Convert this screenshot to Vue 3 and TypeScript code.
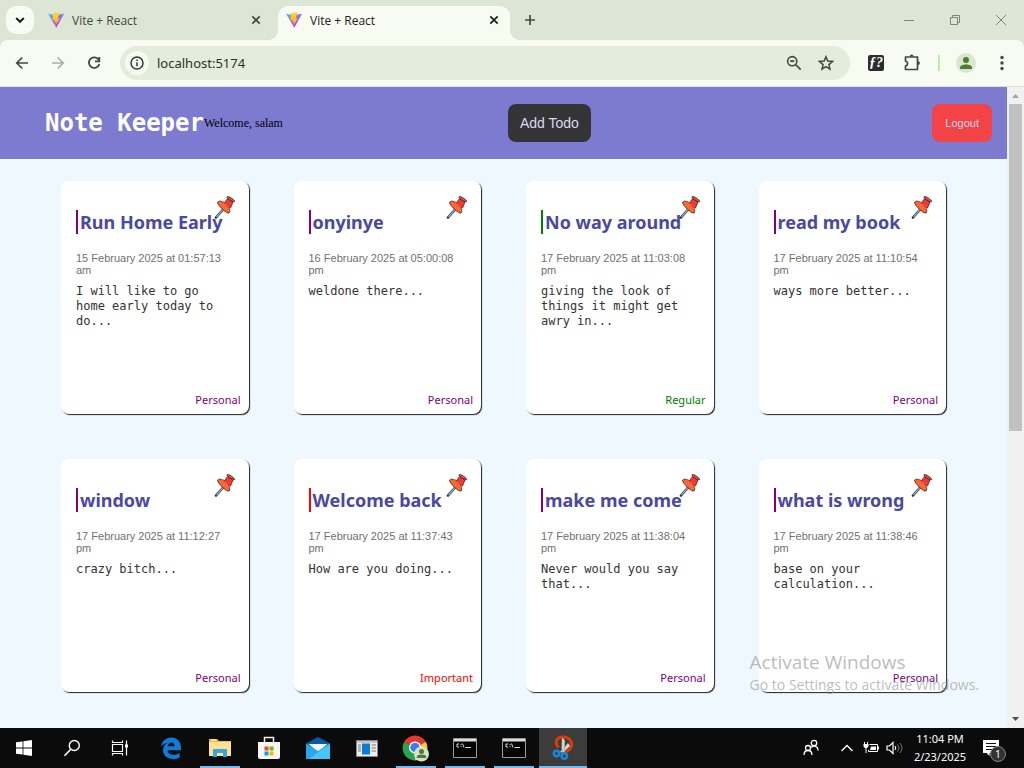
<script setup lang="ts">
import { ref } from 'vue'

interface Note {
  id: number
  title: string
  date: string
  body: string
  category: 'Personal' | 'Regular' | 'Important'
}

const notes: Note[] = [
  { id: 1, title: 'Run Home Early', date: '15 February 2025 at 01:57:13 am', body: 'I will like to go home early today to do...', category: 'Personal' },
  { id: 2, title: 'onyinye', date: '16 February 2025 at 05:00:08 pm', body: 'weldone there...', category: 'Personal' },
  { id: 3, title: 'No way around', date: '17 February 2025 at 11:03:08 pm', body: 'giving the look of things it might get awry in...', category: 'Regular' },
  { id: 4, title: 'read my book', date: '17 February 2025 at 11:10:54 pm', body: 'ways more better...', category: 'Personal' },
  { id: 5, title: 'window', date: '17 February 2025 at 11:12:27 pm', body: 'crazy bitch...', category: 'Personal' },
  { id: 6, title: 'Welcome back', date: '17 February 2025 at 11:37:43 pm', body: 'How are you doing...', category: 'Important' },
  { id: 7, title: 'make me come', date: '17 February 2025 at 11:38:04 pm', body: 'Never would you say that...', category: 'Personal' },
  { id: 8, title: 'what is wrong', date: '17 February 2025 at 11:38:46 pm', body: 'base on your calculation...', category: 'Personal' },
]

const address = ref('localhost:5174')
const tabs = [
  { id: 1, title: 'Vite + React', active: false },
  { id: 2, title: 'Vite + React', active: true },
]
</script>

<template>
  <div class="desktop">
    <header class="browser">
      <div class="tabstrip">
        <button class="tab-search" aria-label="Search tabs">
          <svg width="10" height="10" viewBox="0 0 10 10"><path d="M1.2 3 5 6.8 8.8 3" fill="none" stroke="#1b1f19" stroke-width="2" /></svg>
        </button>
        <div v-for="tab in tabs" :key="tab.id" class="tab" :class="{ active: tab.active }">
          <svg class="favicon" width="16" height="16" viewBox="0 0 16 16">
            <defs>
              <linearGradient :id="'v' + tab.id" x1="0" y1="0" x2=".6" y2="1"><stop offset="0" stop-color="#41d1ff" /><stop offset=".5" stop-color="#8a6cf8" /><stop offset="1" stop-color="#c72cf0" /></linearGradient>
              <linearGradient :id="'b' + tab.id" x1="0" y1="0" x2="0" y2="1"><stop offset="0" stop-color="#ffdd35" /><stop offset="1" stop-color="#ffa800" /></linearGradient>
            </defs>
            <path d="M0 1.7 8 3l8-1.3L8.3 15.7z" :fill="'url(#v' + tab.id + ')'" />
            <path d="M11.8 0 5 1.3 4.500 8.500l2.300-.4-.6 2.500 1.600-.4-.6 3.500 4.800-7.500-2.300.4z" :fill="'url(#b' + tab.id + ')'" />
          </svg>
          <span class="tab-title">{{ tab.title }}</span>
          <button class="tab-close" aria-label="Close tab">
            <svg width="10" height="10" viewBox="0 0 10 10"><path d="m1.3 1.3 7.4 7.4m0-7.4L1.3 8.7" stroke="currentColor" stroke-width="1.7" /></svg>
          </button>
        </div>
        <button class="new-tab" aria-label="New tab">
          <svg width="12" height="12" viewBox="0 0 12 12"><path d="M6 1v10M1 6h10" stroke="#474c43" stroke-width="1.7" /></svg>
        </button>
        <div class="window-controls">
          <button aria-label="Minimize"><svg width="12" height="12" viewBox="0 0 12 12"><path d="M1 6.5h10" stroke="#7d8478" /></svg></button>
          <button aria-label="Restore"><svg width="12" height="12" viewBox="0 0 12 12"><path d="M1.5 3.5h7v7h-7zM3.5 3.5V1.5h7v7h-2" fill="none" stroke="#7d8478" /></svg></button>
          <button aria-label="Close"><svg width="12" height="12" viewBox="0 0 12 12"><path d="m1 1 10 10M11 1 1 11" stroke="#7d8478" /></svg></button>
        </div>
      </div>
      <div class="toolbar">
        <button aria-label="Back"><svg width="16" height="16" viewBox="0 0 16 16"><path d="M14 8H3m5.3-5.5L2.8 8l5.500 5.500" fill="none" stroke="#3c4a3b" stroke-width="1.7" /></svg></button>
        <button aria-label="Forward"><svg width="16" height="16" viewBox="0 0 16 16"><path d="M2 8h11M7.700 2.500 13.200 8l-5.500 5.500" fill="none" stroke="#a8b0a4" stroke-width="1.7" /></svg></button>
        <button aria-label="Reload"><svg width="16" height="16" viewBox="0 0 16 16"><path d="M12.600 4.700A5.300 5.300 0 1 0 13.300 9M13.300 2v4.300H9" fill="none" stroke="#3c4a3b" stroke-width="1.8" /></svg></button>
        <div class="omnibox">
          <button class="site-info" aria-label="Site information"><svg width="14" height="14" viewBox="0 0 14 14"><circle cx="7" cy="7" r="6" fill="none" stroke="#333a31" stroke-width="1.5" /><path d="M7 6.200v4M7 3.500v1.500" stroke="#333a31" stroke-width="1.5" /></svg></button>
          <input v-model="address" type="text" aria-label="Address" />
          <button aria-label="Zoom"><svg width="16" height="16" viewBox="0 0 16 16"><circle cx="6.200" cy="6.200" r="4.600" fill="none" stroke="#41473f" stroke-width="1.6" /><path d="m9.500 9.500 5.200 5.200M4.200 6.200h4" stroke="#41473f" stroke-width="1.7" /></svg></button>
          <button aria-label="Bookmark"><svg width="16" height="16" viewBox="0 0 16 16"><path d="m8 1.800 1.800 4.300 4.700.4-3.600 3.100 1.100 4.600-4-2.500-4 2.500 1.100-4.600L1.500 6.500l4.700-.4z" fill="none" stroke="#41473f" stroke-width="1.5" /></svg></button>
        </div>
        <button class="font-ext" aria-label="WhatFont">ƒ?</button>
        <button aria-label="Extensions"><svg width="18" height="18" viewBox="0 0 18 18"><path d="M2.500 3h12v12.500h-12v-3.500c2.800-.8 2.800-4.200 0-5z" fill="none" stroke="#3c4a3b" stroke-width="1.700" stroke-linejoin="round" /><path d="M6.700 2.500a1.900 1.900 0 0 1 3.800 0zM15 7.200a1.900 1.900 0 0 1 0 3.800z" fill="#3c4a3b" /></svg></button>
        <span class="divider"></span>
        <button aria-label="Profile"><svg width="20" height="20" viewBox="0 0 20 20"><circle cx="10" cy="10" r="10" fill="#d8e7cd" /><circle cx="10" cy="7" r="3" fill="#4d7d33" /><path d="M4 16v-1.500c0-4 12-4 12 0V16z" fill="#4d7d33" /></svg></button>
        <button aria-label="Menu"><svg width="16" height="16" viewBox="0 0 16 16"><g fill="#3c4a3b"><circle cx="8" cy="2.500" r="1.700" /><circle cx="8" cy="8" r="1.700" /><circle cx="8" cy="13.500" r="1.700" /></g></svg></button>
      </div>
    </header>

    <div class="viewport">
      <div class="page">
        <nav class="app-bar">
          <div class="brand"><h1>Note Keeper</h1><span>Welcome, salam</span></div>
          <button class="add">Add Todo</button>
          <div class="account"><button class="logout">Logout</button></div>
        </nav>
        <main class="notes">
          <article v-for="note in notes" :key="note.id" class="note" :class="note.category.toLowerCase()">
            <button class="pin" aria-label="Unpin note">
              <svg width="22" height="24" viewBox="0 0 22 24">
                <path d="m2 22.500 8-9" stroke="#26383f" stroke-width="2.600" stroke-linecap="round" />
                <path d="m2.500 22 7.500-8.500" stroke="#8fb0bb" stroke-width="1.200" />
                <path d="m10.500 8 3-4.500 5.500 3.500-2.500 6z" fill="#f03a35" stroke="#3a2825" stroke-width=".8" />
                <path d="M13 1.800c.8-1.500 8 3 7.700 4.800-.6 1.200-8.400-3-7.700-4.800z" fill="#f4473a" stroke="#3a2825" stroke-width=".8" />
                <path d="M3.500 7.200c1.500-2 5.500-1 8.500 1.700s4.700 6.800 3.200 9c-1.500.8-4-1.200-6.500-3.500s-5-5-5.200-7.200z" fill="#ff6630" stroke="#3a2825" stroke-width=".8" />
                <path d="m10.500 8.500 4.800 4.500.7-2.500L12.500 7z" fill="#f03a35" />
              </svg>
            </button>
            <div class="note-main">
              <h2>{{ note.title }}</h2>
              <time>{{ note.date }}</time>
              <p>{{ note.body }}</p>
            </div>
            <span class="category">{{ note.category }}</span>
          </article>
        </main>
      </div>
      <div class="scrollbar">
        <svg width="17" height="17" viewBox="0 0 17 17"><path d="m5 11 3.500-4 3.500 4z" fill="#a3a3a3" /></svg>
        <div class="thumb"></div>
        <svg width="17" height="17" viewBox="0 0 17 17"><path d="m5 6 3.500 4L12 6z" fill="#505050" /></svg>
      </div>
      <div class="watermark"><strong>Activate Windows</strong><span>Go to Settings to activate Windows.</span></div>
    </div>

    <footer class="taskbar">
      <button aria-label="Start"><svg width="16" height="16" viewBox="0 0 16 16"><path d="M0 2.300 6.600 1.400v6.200H0zM7.400 1.300 16 0v7.600H7.400zM0 8.400h6.600v6.200L0 13.700zM7.400 8.400H16V16l-8.600-1.300z" fill="#fff" /></svg></button>
      <button aria-label="Search"><svg width="18" height="18" viewBox="0 0 18 18"><circle cx="11.300" cy="6.500" r="5" fill="none" stroke="#fff" stroke-width="1.400" /><path d="M7.800 10.200 1.500 16.700" stroke="#fff" stroke-width="1.600" /></svg></button>
      <button aria-label="Task view"><svg width="18" height="18" viewBox="0 0 18 18"><path d="M1.500 1.500v2h10v-2M1.500 16.500v-2h10v2M1.500 5.500h10v7h-10zM15.500 1.500v15" fill="none" stroke="#fff" stroke-width="1.200" /><path d="M14 5.500h3v3h-3z" fill="#fff" /></svg></button>
      <button class="edge" aria-label="Microsoft Edge"><svg width="22" height="22" viewBox="0 0 22 22"><path d="M1 9.700C2 4 6 .5 11.200.5c6.300 0 9.800 4.500 9.800 10.300v2.400H7.600c.2 5.300 7.400 5.700 12 2.700v4.500C13.200 23.700 3 21.700 3 13.200c0-3.500 2.200-6.500 5-7.800C4.800 6.300 2.500 7.600 1 9.700zm6.700-.4h6.800c0-5.300-6-4.600-6.800 0z" fill="#0c7cd8" /></svg></button>
      <button class="running" aria-label="File Explorer"><svg width="22" height="20" viewBox="0 0 22 20"><path d="M0 1h8l2 2h12v15H0z" fill="#f5bd37" /><path d="M0 4h22v14H0z" fill="#ffe293" /><path d="M2 1.500h5v1H2z" fill="#fff" /><path d="M4 11h14v8h-4v-4H8v4H4z" fill="#31a9df" /></svg></button>
      <button aria-label="Microsoft Store"><svg width="24" height="24" viewBox="0 0 24 24"><path d="M7.500 7V1.500h9V7" fill="none" stroke="#eee" stroke-width="1.500" /><path d="M1 6h22v15q0 2-2 2H3q-2 0-2-2z" fill="#f5f5f5" /><path d="M7.500 10.500h4v4h-4z" fill="#f04b22" /><path d="M12.500 10.500h4v4h-4z" fill="#7cb701" /><path d="M7.500 15.500h4v4h-4z" fill="#00a3ed" /><path d="M12.500 15.500h4v4h-4z" fill="#fdb800" /></svg></button>
      <button aria-label="Mail"><svg width="24" height="22" viewBox="0 0 24 22"><path d="M0 6.500 12 0l12 6.500-12 9z" fill="#075aaa" /><path d="M2.500 7h19L12 15z" fill="#f3f3f3" /><path d="m0 6.500 12 7.500 12-7.500V22H0z" fill="#28a8ea" /><path d="M24 6.500V22H3z" fill="#48c5f7" /></svg></button>
      <button aria-label="Settings panel"><svg width="22" height="17" viewBox="0 0 22 17"><path d="M.5.5h21v16H.5z" fill="#eee" stroke="#888" /><path d="M1 1h20v2H1z" fill="#c5c5c5" /><path d="M6 3.500h8v11H6z" fill="#0b7bd8" /><path d="M2 5h3M2 7h3M2 9h3M2 11h3M15.500 5H20M15.500 8H20M15.500 11H20" stroke="#777" /></svg></button>
      <button class="running" aria-label="Google Chrome"><svg width="28" height="28" viewBox="0 0 28 28"><path d="M13 14 2.200 7.800A12.500 12.500 0 0 1 23.800 7.800z" fill="#e7382e" /><path d="M13 14V26.500A12.500 12.500 0 0 1 2.200 7.800z" fill="#2ba24c" /><path d="M13 14 23.800 7.800A12.500 12.500 0 0 1 13 26.500z" fill="#fcc934" /><circle cx="13" cy="13.500" r="6" fill="#fff" /><circle cx="13" cy="13.500" r="4.700" fill="#3b7ded" /><circle cx="19.500" cy="20" r="7.500" fill="#d5e4c8" /><circle cx="19.500" cy="17.500" r="2.500" fill="#55763f" /><path d="M14.800 24v-1.300c0-2.800 9.400-2.800 9.400 0V24z" fill="#55763f" /></svg></button>
      <button v-for="n in 2" :key="n" class="running" aria-label="Command Prompt"><svg width="24" height="20" viewBox="0 0 24 20"><path d="M.5.500h23v19H.5z" fill="#050505" stroke="#9a9a9a" /><path d="M1 1h22v2.500H1z" fill="#ddd" /><path d="M6 6H4v3h2M8 6v1m0 1v1M9.500 5.500 11 9.500M12.500 9.500H18" fill="none" stroke="#ddd" /></svg></button>
      <button class="running current" aria-label="Snipping Tool"><svg width="22" height="26" viewBox="0 0 22 26"><path d="M6.500 12.500C2 7 5 2 11 2s9 4 8.500 8-3.500 6.500-6.500 6.500" fill="none" stroke="#d63b08" stroke-width="3.200" /><path d="m10 2.500-.3 13 3 3V5zM16 8l-5 6.500-4 3 4.500-.5 6.500-6z" fill="#dedede" stroke="#8c8c8c" stroke-width=".5" /><circle cx="4.500" cy="18.500" r="2.700" fill="none" stroke="#1688d8" stroke-width="2.400" /><circle cx="12.300" cy="21" r="2.700" fill="none" stroke="#1688d8" stroke-width="2.400" /></svg></button>
      <div class="tray">
        <button aria-label="People"><svg width="16" height="18" viewBox="0 0 16 18"><g fill="none" stroke="#fff" stroke-width="1.300"><circle cx="11" cy="4" r="2.700" /><circle cx="5" cy="9" r="2.500" /><path d="M1 16c0-6 8-6 8 0M8 8.500c3-3 7-1 7.200 3" /></g></svg></button>
        <button aria-label="Show hidden icons"><svg width="14" height="10" viewBox="0 0 14 10"><path d="m1.500 8 5.500-5.500L12.500 8" fill="none" stroke="#fff" stroke-width="1.400" /></svg></button>
        <button aria-label="Battery"><svg width="16" height="14" viewBox="0 0 16 14"><path d="M6.500 3.500h8v7h-9V9M15.500 5.500v3M1.500 1v2M4.500 1v2M3 7v5" fill="none" stroke="#fff" /><path d="M.5 3h5v2.500L4 7H2L.5 5.500zM8 5.500h5v3.500H7z" fill="#fff" /></svg></button>
        <button aria-label="Volume"><svg width="18" height="14" viewBox="0 0 18 14"><path d="M1 5h2.500L7 1.500v11L3.500 9H1zM9 5q1.500 2 0 4" fill="none" stroke="#fff" stroke-width="1.200" /><path d="M11.500 3.500q3 3.500 0 7M14 2q4 5 0 10" fill="none" stroke="#777" /></svg></button>
        <div class="clock"><span>11:04 PM</span><span>2/23/2025</span></div>
        <button class="notifications" aria-label="Notifications"><svg width="16" height="16" viewBox="0 0 16 16"><path d="M0 0h16v13H6.500v3l-3-3H0z" fill="#fff" /><path d="M3 3.500h10M3 6.500h10M3 9.500h7" stroke="#111" /></svg><span class="badge">1</span></button>
      </div>
    </footer>
  </div>
</template>

<style>
html, body { margin: 0; background: #eff7ff; }
</style>

<style scoped>
* { box-sizing: border-box; }
button { display: flex; align-items: center; justify-content: center; flex: none; border: 0; padding: 0; background: none; font-family: inherit; }
svg { display: block; flex: none; }
.desktop { display: flex; flex-direction: column; height: 100vh; overflow: hidden; font-family: "Open Sans", "Noto Sans", sans-serif; }
.browser { flex: none; background: #dde5d5; border-bottom: 1px solid #dce0d7; }

.tabstrip { display: flex; height: 40px; padding: 6px 0 0 6px; }
.tab-search { width: 28px; height: 28px; margin-right: 6px; border-radius: 10px; background: #f8fbf2; }
.tab { position: relative; display: flex; align-items: center; width: 232px; height: 34px; padding: 0 8px 6px; color: #42483f; }
.tab + .tab { margin-left: 6px; }
.tab.active { color: #1c201a; background: #f8fbf2; border-radius: 10px 10px 0 0; }
.tab.active::before, .tab.active::after { content: ""; position: absolute; bottom: 0; width: 10px; height: 10px; }
.tab.active::before { right: 100%; background: radial-gradient(circle at 0 0, #dde5d5 10px, #f8fbf2 10px); }
.tab.active::after { left: 100%; background: radial-gradient(circle at 100% 0, #dde5d5 10px, #f8fbf2 10px); }
.tab-title { flex: 1; margin-left: 8px; padding-top: 2px; font-size: 12px; line-height: 16px; }
.tab-close { width: 16px; height: 16px; color: inherit; }
.new-tab { width: 28px; height: 28px; margin-left: 6px; }
.window-controls { display: flex; margin-left: auto; }
.window-controls button { width: 46px; height: 28px; }

.toolbar { display: flex; align-items: center; height: 46px; padding: 0 4px; border-radius: 8px 8px 0 0; background: #f8fbf2; }
.toolbar > button { width: 36px; height: 32px; }
.omnibox { display: flex; align-items: center; flex: 1; height: 34px; margin: 0 8px; padding: 0 8px 0 5px; border-radius: 17px; background: #e4eddb; }
.omnibox button { width: 32px; height: 24px; }
.omnibox .site-info { width: 24px; border-radius: 12px; background: #f8fbf2; }
.omnibox input { flex: 1; min-width: 0; margin-left: 7px; padding: 0 0 0 1px; border: 0; outline: 0; background: none; color: #2c3129; font-family: "Noto Sans", sans-serif; font-size: 13px; line-height: 20px; }
.toolbar > .font-ext { width: 16px; height: 16px; margin: 0 10px; border-radius: 2px; background: #2d2d2d; color: #fff; font: italic bold 14px/16px "Liberation Serif", serif; }
.divider { width: 2px; height: 16px; margin: 0 8px; background: #b8efa4; }

.viewport { position: relative; display: flex; flex: 1; min-height: 0; overflow: hidden; }
.page { flex: 1; min-width: 0; background: #eff7ff; }
.app-bar { display: grid; grid-template-columns: 15fr auto 13fr; align-items: center; height: 72px; padding: 0 15px 0 45px; background: #7c7bd0; }
.brand { display: flex; align-items: center; white-space: nowrap; }
.brand h1 { margin: 0; color: #fff; font: bold 24px/32px "DejaVu Sans Mono", monospace; }
.brand span { color: #000; font: 12px/16px "Liberation Serif", serif; }
.app-bar button { height: 38px; padding: 0 12px; border-radius: 8px; color: #d9dbee; font-family: "Liberation Sans", Arial, sans-serif; }
.add { background: #343436; font-size: 14px; }
.account { display: flex; justify-content: flex-end; }
.app-bar .logout { padding: 0 13px; background: #f44346; font-size: 11px; }

.notes { display: grid; grid-template-columns: repeat(4, minmax(0, 1fr)); gap: 45px; padding: 22px 61px; }
.note { position: relative; display: flex; flex-direction: column; min-height: 233px; padding: 29px 8px 6px 15px; border-radius: 8px; background: #fff; box-shadow: 1px 1px 1px #222; }
.personal { --accent: purple; }
.regular { --accent: green; }
.important { --accent: red; }
.pin { position: absolute; top: 14px; right: 13px; }
.note-main { padding-right: 7px; }
.note h2 { margin: 0 0 18px; padding-left: 2px; border-left: 2px solid var(--accent); color: #4a48a3; font: bold 18px/24px "Noto Sans", sans-serif; white-space: nowrap; }
.note time { display: block; color: #707070; font: 11px/12px "Liberation Sans", Arial, sans-serif; }
.note p { margin: 8px 0 0; color: #333; font: 12px/15px "DejaVu Sans Mono", monospace; }
.category { align-self: flex-end; margin-top: auto; color: var(--accent); font: 11px/16px "Noto Sans", sans-serif; }

.scrollbar { display: flex; flex-direction: column; width: 17px; background: #f1f1f1; }
.scrollbar .thumb { height: 51%; margin: 0 2px; background: #c1c1c1; }
.scrollbar svg:last-child { margin-top: auto; }
.watermark { position: absolute; right: 45px; bottom: 33px; display: flex; flex-direction: column; color: rgba(150, 150, 150, .65); white-space: nowrap; pointer-events: none; }
.watermark strong { font-size: 19px; font-weight: 400; line-height: 26px; }
.watermark span { font-size: 14px; line-height: 20px; }

.taskbar { display: flex; flex: none; height: 40px; background: #0b0b0b; color: #fff; }
.taskbar > button { width: 48px; height: 40px; }
.taskbar > .edge { margin-left: 3px; }
.taskbar > .edge ~ button { margin-left: 1px; }
.running { background: linear-gradient(#76b9ed, #76b9ed) center bottom / 40px 2px no-repeat; }
.current { background: linear-gradient(#76b9ed, #76b9ed) center bottom / 48px 2px no-repeat #3c3c3c; }
.tray { display: flex; align-items: center; margin-left: auto; padding-right: 15px; }
.tray button { width: 24px; height: 40px; }
.tray button:first-child { margin-right: 12px; }
.clock { display: flex; flex-direction: column; align-items: center; width: 66px; font: 11px/18px "Noto Sans", sans-serif; }
.tray .notifications { position: relative; width: 36px; }
.badge { position: absolute; left: 17px; top: 18px; width: 16px; height: 16px; border: 1px solid #888; border-radius: 8px; background: #333; color: #fff; font-size: 11px; line-height: 14px; }
</style>
